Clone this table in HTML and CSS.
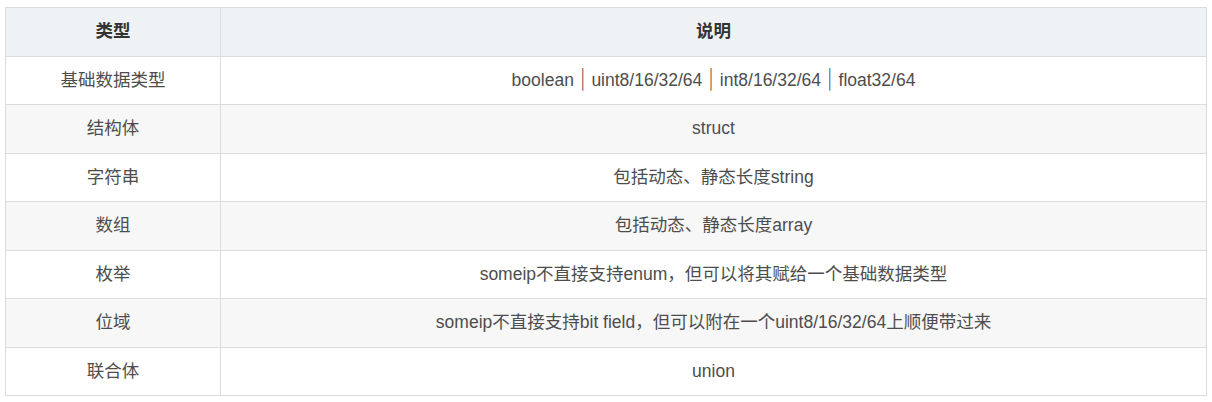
FILE: index.html
```html
<!DOCTYPE html>
<html lang="zh-CN">
<head>
<meta charset="utf-8">
<link rel="stylesheet" href="styles.css">
</head>
<body>
<table class="types">
  <thead>
    <tr><th class="col-type">类型</th><th>说明</th></tr>
  </thead>
  <tbody>
    <tr><td>基础数据类型</td><td>boolean<span class="sep">｜</span>uint8/16/32/64<span class="sep">｜</span>int8/16/32/64<span class="sep">｜</span>float32/64</td></tr>
    <tr><td>结构体</td><td>struct</td></tr>
    <tr><td>字符串</td><td>包括动态、静态长度string</td></tr>
    <tr><td>数组</td><td>包括动态、静态长度array</td></tr>
    <tr><td>枚举</td><td>someip不直接支持enum，但可以将其赋给一个基础数据类型</td></tr>
    <tr><td>位域</td><td>someip不直接支持bit field，但可以附在一个uint8/16/32/64上顺便带过来</td></tr>
    <tr><td>联合体</td><td>union</td></tr>
  </tbody>
</table>
</body>
</html>
```
FILE: styles.css
```css
html, body {
  margin: 0;
  padding: 0;
  background: #fff;
}
body {
  padding: 7px 0 0 5px;
  font-family: "Liberation Sans", "Noto Sans CJK SC", sans-serif;
  font-size: 17.5px;
  color: #4d4d4d;
}
.types {
  border-collapse: collapse;
  width: 1202px;
  table-layout: fixed;
}
.types th, .types td {
  border: 1px solid #dcdcdc;
  text-align: center;
  padding: 12px 10px;
  line-height: 23.5px;
  height: 23.5px;
}
.types th {
  background: #eff2f5;
  font-weight: bold;
  color: #333;
}
.types .col-type {
  width: 194px;
}
.types tbody tr:nth-child(even) td {
  background: #f7f7f7;
}
.sep {
  display: inline-block;
  color: #1a1a1a;
  transform: scaleY(1.3);
  line-height: 1;
}
```
